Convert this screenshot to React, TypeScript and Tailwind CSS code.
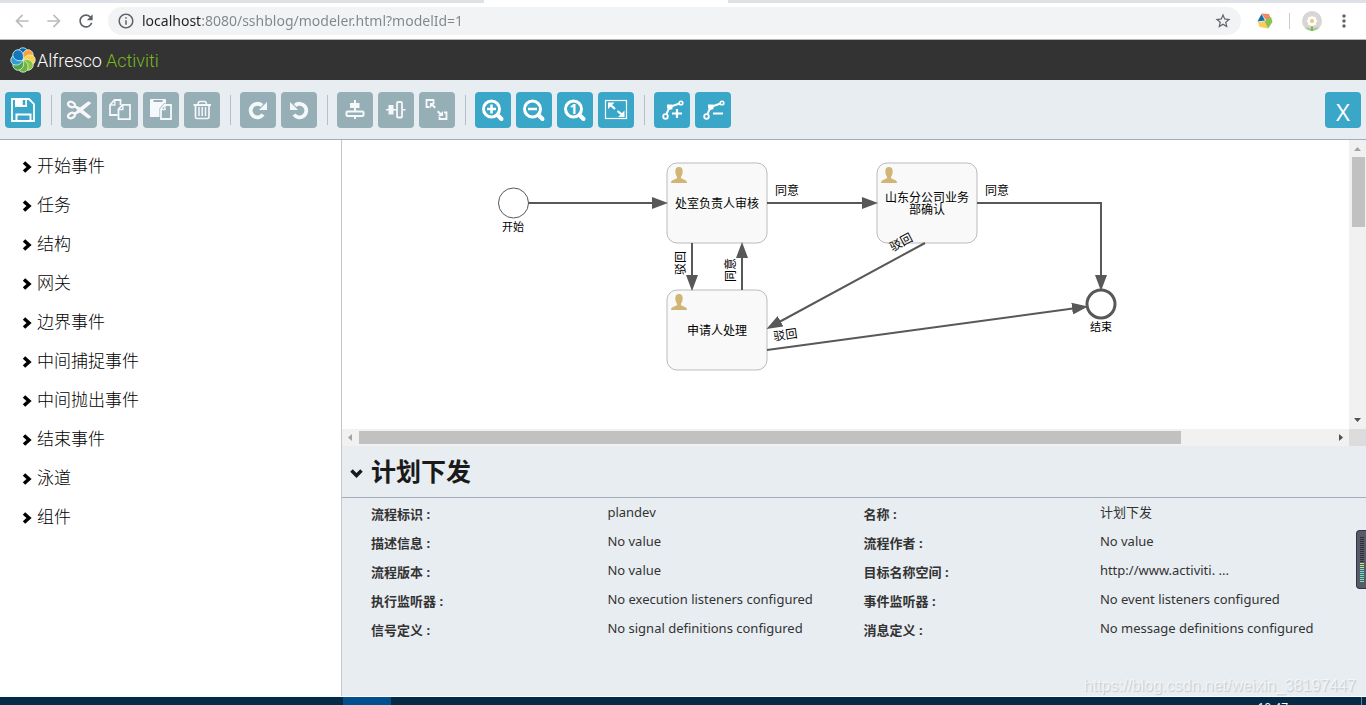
import type { ReactNode } from 'react'
import { MdArrowBack, MdArrowForward, MdInfoOutline, MdMoreVert, MdRefresh, MdStarBorder } from 'react-icons/md'

// ── Data ──

const paletteGroups = ['开始事件', '任务', '结构', '网关', '边界事件', '中间捕捉事件', '中间抛出事件', '结束事件', '泳道', '组件']

const properties: [string, string][] = [
  ['流程标识', 'plandev'],
  ['名称', '计划下发'],
  ['描述信息', 'No value'],
  ['流程作者', 'No value'],
  ['流程版本', 'No value'],
  ['目标名称空间', 'http://www.activiti. ...'],
  ['执行监听器', 'No execution listeners configured'],
  ['事件监听器', 'No event listeners configured'],
  ['信号定义', 'No signal definitions configured'],
  ['消息定义', 'No message definitions configured'],
]

// ── Browser chrome ──

function BrowserBar() {
  return (
    <div className="shrink-0 border-b border-[#b6b6b6] bg-white">
      <div className="flex h-[3px] bg-[#dee1e6]">
        <div className="ml-[484px] w-[244px] bg-white" />
      </div>
      <div className="flex h-9 items-center pr-3 pl-3">
        <button aria-label="Back" className="mr-3 text-[#babcbe]"><MdArrowBack size={20} /></button>
        <button aria-label="Forward" className="mr-3 text-[#babcbe]"><MdArrowForward size={20} /></button>
        <button aria-label="Reload" className="mr-3 text-[#5f6368]"><MdRefresh size={20} /></button>
        <div className="flex h-7 flex-1 items-center rounded-full bg-[#f1f3f4] pr-[9px] pl-[9px] text-[#5f6368]">
          <MdInfoOutline size={18} />
          <input
            aria-label="Address"
            className="ml-[7px] min-w-0 flex-1 bg-[linear-gradient(90deg,#202124_60px,#80868b_60px)] bg-clip-text font-['Noto_Sans',sans-serif] text-sm text-transparent outline-none"
            defaultValue="localhost:8080/sshblog/modeler.html?modelId=1"
          />
          <button aria-label="Bookmark"><MdStarBorder size={18} /></button>
        </div>
        <button aria-label="Extension" className="ml-4">
          <svg width="16" height="16" viewBox="0 0 16 16">
            <path d="M4.500 0.500 L12 1 L14 6 L8 6 Z" fill="#f4895f" />
            <path d="M4.500 1 L8 7.500 L0.500 8.500 Z" fill="#0c6fae" />
            <path d="M1 9 L8 8 L11 15.500 L2.500 14 Z" fill="#f9cf5a" />
            <path d="M9 6 L14 4 L15.500 9 L11 15.500 L8 9 Z" fill="#8cc152" />
          </svg>
        </button>
        <div className="ml-4 h-4 w-px bg-[#c8cacd]" />
        <button aria-label="Profile" className="ml-3 overflow-hidden rounded-full">
          <svg width="20" height="20" viewBox="0 0 20 20">
            <rect width="20" height="20" fill="#d6d6d4" />
            <path d="M3 17 Q8 15.500 10 19 Q13 15.500 17 17 L17 20 L3 20 Z" fill="#a3cf86" />
            <path d="M10 12 V20" stroke="#5d8a45" strokeWidth="1.200" />
            {[0, 45, 90, 135, 180, 225, 270, 315].map((a) => (
              <ellipse key={a} cx="10" cy="7.500" rx="1.700" ry="2.800" fill="#fff" transform={`rotate(${a} 10 10)`} />
            ))}
            <circle cx="10" cy="10" r="2" fill="#f0c75e" />
          </svg>
        </button>
        <button aria-label="Menu" className="ml-3 text-[#5f6368]"><MdMoreVert size={20} /></button>
      </div>
    </div>
  )
}

// ── Product header ──

const petals = ['#0a67b2', '#f9a13a', '#ffcf45', '#8cc63f', '#6cb33f', '#4ca64c', '#2f9ed8', '#1177c0']

function AppHeader() {
  return (
    <header className="flex h-10 shrink-0 items-center bg-[#333333] pl-[10px] font-[Roboto,sans-serif] text-lg font-light">
      <svg width="26" height="26" viewBox="0 0 26 26" className="mr-px">
        {petals.map((color, i) => (
          <path
            key={color}
            d="M13 13 C9.500 11.500 7.500 8.500 8 5 C8.500 2 10.500 0.800 13 0.800 C16 0.800 18 3 18 6 C18 9 15.500 11.500 13 13 Z"
            fill={color}
            stroke="#e6f2e6"
            strokeWidth="0.800"
            transform={`rotate(${i * 45} 13 13)`}
          />
        ))}
      </svg>
      <span className="pt-[2px] text-white">Alfresco</span>
      <span className="ml-1 pt-[2px] text-[#79b81e]">Activiti</span>
    </header>
  )
}

// ── Toolbar ──

function Tool({ label, active, children }: { label: string; active?: boolean; children: ReactNode }) {
  return (
    <button
      aria-label={label}
      title={label}
      className={`size-9 shrink-0 rounded-sm ${active ? 'bg-[#3aa7c9] text-white' : 'bg-[#96aeb5] text-[#f5f8fa]'}`}
    >
      <svg width="36" height="36" viewBox="0 0 36 36" fill="none" stroke="currentColor" strokeWidth="2">
        {children}
      </svg>
    </button>
  )
}

function Separator() {
  return <div className="mr-1 ml-[5px] h-[30px] w-px shrink-0 bg-[#b4bfc8]" />
}

function Lens({ children }: { children: ReactNode }) {
  return (
    <>
      <circle cx="16.500" cy="17" r="8" strokeWidth="3" />
      <path d="M22.500 23 L26.500 27" strokeWidth="4" strokeLinecap="round" />
      {children}
    </>
  )
}

function BendPoint() {
  return (
    <>
      <circle cx="11.500" cy="24.500" r="2.300" strokeWidth="1.800" />
      <circle cx="27" cy="11" r="1.800" strokeWidth="1.600" />
      <path d="M12.500 22 L15.500 15 L25.500 11.500" />
      <path d="M13 12.500 H18.500 V17 L15.500 18 L13 16 Z" fill="currentColor" stroke="none" />
    </>
  )
}

const redoShape = (
  <>
    <path d="M23 22.500 A6.800 6.800 0 1 1 22 13.500" strokeWidth="3.800" />
    <path d="M27 10 V18 H19 Z" fill="currentColor" stroke="none" />
  </>
)

function Toolbar() {
  return (
    <div role="toolbar" className="flex h-[60px] shrink-0 items-center gap-[5px] border-b border-[#a4acb9] bg-[#e8edf1] px-[5px]">
      <Tool label="保存" active>
        <path d="M7 7 H24 L29 12 V29 H7 Z" strokeWidth="1.800" />
        <path d="M10 7 H22 V15 H10 Z" fill="currentColor" stroke="none" />
        <path d="M19 8 V13" stroke="#3aa7c9" strokeWidth="2.500" />
        <path d="M11.500 29 V22.500 H25.500 V29" />
      </Tool>
      <Separator />
      <Tool label="剪切">
        <ellipse cx="10.500" cy="12.500" rx="3.600" ry="2.500" transform="rotate(25 10.500 12.500)" strokeWidth="2.400" />
        <ellipse cx="10.500" cy="23.500" rx="3.600" ry="2.500" transform="rotate(-25 10.500 23.500)" strokeWidth="2.400" />
        <path d="M14 13 L19 15.500 L27 9.500 Q29.500 9 30 11.500 L22 18 L30 24.500 Q29.500 27 27 26.500 L19 20.500 L14 23 L13 21 L16.500 18 L13 15 Z" fill="currentColor" stroke="none" />
      </Tool>
      <Tool label="复制">
        <path d="M15.500 23 H8 V13 L12.500 8 H18.500 V13" strokeWidth="1.800" />
        <path d="M12.800 8 V13 H8" strokeWidth="1.400" />
        <path d="M20.500 12.800 H28 V27.200 H16.500 V17 Z" strokeWidth="1.800" />
        <path d="M20.800 13 V17.500 H16.500" strokeWidth="1.400" />
      </Tool>
      <Tool label="粘贴">
        <path d="M7 8 Q7 7 8 7 H22 Q23 7 23 8 V25 H7 Z" fill="currentColor" stroke="none" />
        <path d="M10.500 9 H19.500" stroke="#96aeb5" />
        <path d="M21.500 13 H28 V27 H18 V17 Z" fill="#96aeb5" stroke="#96aeb5" strokeWidth="3" />
        <path d="M21.500 13 H28 V27 H18 V17 Z" strokeWidth="1.800" />
        <path d="M22 13 V17.500 H18" strokeWidth="1.400" />
      </Tool>
      <Tool label="删除">
        <path d="M9.500 13 H27" />
        <path d="M14 12.500 Q14 9.500 16 9.500 H20.500 Q22.500 9.500 22.500 12.500" strokeWidth="1.500" />
        <path d="M11.500 13 V25 Q11.500 26.500 13 26.500 H23.500 Q25 26.500 25 25 V13" strokeWidth="1.700" />
        <path d="M15 15 V24 M18.200 15 V24 M21.500 15 V24" strokeWidth="1.500" />
      </Tool>
      <Separator />
      <Tool label="重做">{redoShape}</Tool>
      <Tool label="撤销">
        <g transform="matrix(-1 0 0 1 36 0)">{redoShape}</g>
      </Tool>
      <Separator />
      <Tool label="垂直对齐">
        <path d="M13 11 H22.500 V16 H13 Z" fill="currentColor" stroke="none" />
        <path d="M18 8 V19 M18 25 V27" />
        <rect x="9.500" y="19.500" width="17" height="4.500" rx="1" />
      </Tool>
      <Tool label="水平对齐">
        <path d="M10.500 13 H15.500 V22.500 H10.500 Z" fill="currentColor" stroke="none" />
        <path d="M8 17.800 H19 M25 17.800 H27.500" strokeWidth="1.500" />
        <rect x="19" y="10" width="5" height="15.500" rx="1" strokeWidth="1.800" />
      </Tool>
      <Tool label="相同大小">
        <path d="M10.500 15 H7.500 V8 H14.500 V11" strokeWidth="1.800" />
        <path d="M11 11 H16 L14.500 12.500 L17 15 L15.500 16.500 L13 14 L11 16 Z" fill="currentColor" stroke="none" />
        <path d="M25 20.500 H27.500 V27 H20.500 V24.500" strokeWidth="1.800" />
        <path d="M24 24 H19 L20.500 22.500 L18 20 L19.500 18.500 L22 21 L24 19 Z" fill="currentColor" stroke="none" />
      </Tool>
      <Separator />
      <Tool label="放大" active>
        <Lens><path d="M12 17 H21 M16.500 12.500 V21.500" strokeWidth="2.500" /></Lens>
      </Tool>
      <Tool label="缩小" active>
        <Lens><path d="M12 17 H21" strokeWidth="2.500" /></Lens>
      </Tool>
      <Tool label="实际大小" active>
        <Lens>
          <text x="16.500" y="22" textAnchor="middle" fill="currentColor" stroke="none" className="font-['Open_Sans',sans-serif] text-sm font-bold">1</text>
        </Lens>
      </Tool>
      <Tool label="适应窗口" active>
        <rect x="7.500" y="8.500" width="21" height="18" strokeWidth="1.200" />
        <path d="M10 10.500 H16.500 L10 17 Z M26.500 25 H20 L26.500 18.500 Z" fill="currentColor" stroke="none" />
        <path d="M12 12.500 L17 17 M19.500 19 L24.500 23" strokeWidth="2.200" />
      </Tool>
      <Separator />
      <Tool label="添加拐点" active>
        <BendPoint />
        <path d="M18 21.500 H28 M23 17 V26" strokeWidth="2.200" />
      </Tool>
      <Tool label="删除拐点" active>
        <BendPoint />
        <path d="M18 21.500 H28" />
      </Tool>
      <button aria-label="关闭" className="ml-auto size-9 shrink-0 rounded-sm bg-[#3aa7c9] pt-1 text-2xl leading-8 text-white">X</button>
    </div>
  )
}

// ── Palette ──

function Palette() {
  return (
    <nav className="w-[342px] shrink-0 border-r border-[#c3c7cb] bg-white pt-[6px] pl-[22px]">
      {paletteGroups.map((name) => (
        <button key={name} className="flex h-[39px] w-full items-center gap-[5px] text-[17px] font-light text-black">
          <svg width="10" height="12" viewBox="0 0 10 12" className="mt-[2px]">
            <path d="M2 1.500 L7 6 L2 10.500" fill="none" stroke="currentColor" strokeWidth="3.500" />
          </svg>
          {name}
        </button>
      ))}
    </nav>
  )
}

// ── Process diagram ──

function Task({ x, y, lines }: { x: number; y: number; lines: string[] }) {
  return (
    <g transform={`translate(${x} ${y})`}>
      <rect width="100" height="80" rx="10" fill="#f9f9f9" stroke="#bbbbbb" />
      <path
        transform="translate(4 4)"
        d="M8 0 C5.300 0 4.200 1.800 4.300 4.500 C4.400 7 5.300 8.800 6 9.800 V11.200 L1.500 13.200 Q0 14 0 16 H16 Q16 14 14.500 13.200 L10 11.200 V9.800 C10.700 8.800 11.600 7 11.700 4.500 C11.800 1.800 10.700 0 8 0 Z"
        fill="#d1b575"
      />
      {lines.map((line, i) => (
        <text key={line} x="50" y={45 - (lines.length - 1) * 6 + i * 12} textAnchor="middle">{line}</text>
      ))}
    </g>
  )
}

const flows = [
  'M186 63 H322',
  'M425 63 H532',
  'M635 63 H759 V147',
  'M350 103 V147',
  'M400 150 V106',
  'M583 103 L428 187',
  'M425 210 L742 167',
]

function Diagram() {
  return (
    <svg width="1007" height="289" viewBox="0 0 1007 289" className="block max-w-none text-xs" fill="#000">
      <defs>
        <marker id="arrow" markerUnits="userSpaceOnUse" markerWidth="16" markerHeight="12" refX="12" refY="6" orient="auto">
          <path d="M0 0 L16 6 L0 12 Z" fill="#585858" />
        </marker>
      </defs>
      <circle cx="171.500" cy="63" r="15" fill="#fff" stroke="#585858" />
      <text x="171" y="91" textAnchor="middle" className="text-[11px]">开始</text>
      <Task x={325} y={23} lines={['处室负责人审核']} />
      <Task x={535} y={23} lines={['山东分公司业务', '部确认']} />
      <Task x={325} y={150} lines={['申请人处理']} />
      <circle cx="759" cy="164" r="14" fill="#fff" stroke="#585858" strokeWidth="3" />
      <text x="759" y="191" textAnchor="middle" className="text-[11px]">结束</text>
      {flows.map((d) => (
        <path key={d} d={d} fill="none" stroke="#585858" strokeWidth="2" markerEnd="url(#arrow)" />
      ))}
      <text x="433" y="55">同意</text>
      <text x="643" y="55">同意</text>
      <text transform="translate(343 123) rotate(-90)" textAnchor="middle">驳回</text>
      <text transform="translate(393 130) rotate(-90)" textAnchor="middle">同意</text>
      <text transform="translate(561 106) rotate(-28)" textAnchor="middle">驳回</text>
      <text transform="translate(444 199) rotate(-8)" textAnchor="middle">驳回</text>
    </svg>
  )
}

function ScrollArrow({ d, muted }: { d: string; muted?: boolean }) {
  return (
    <svg width="17" height="17" viewBox="0 0 17 17" className="shrink-0">
      <path d={d} fill={muted ? '#a3a3a3' : '#505050'} />
    </svg>
  )
}

function Canvas() {
  return (
    <div className="grid h-[306px] shrink-0 grid-cols-[minmax(0,1fr)_17px] grid-rows-[minmax(0,1fr)_17px]">
      <div className="overflow-hidden bg-white"><Diagram /></div>
      <div className="flex flex-col items-center bg-[#f1f1f1]">
        <ScrollArrow d="M5 11 L8.500 7 L12 11 Z" muted />
        <div className="w-full flex-1 pr-px pl-[3px]"><div className="h-[70px] bg-[#c1c1c1]" /></div>
        <ScrollArrow d="M5 6 L8.500 10 L12 6 Z" />
      </div>
      <div className="flex items-center bg-[#f1f1f1]">
        <ScrollArrow d="M10 5 L6 8.500 L10 12 Z" muted />
        <div className="flex-1"><div className="h-[13px] w-[84.5%] bg-[#c1c1c1]" /></div>
        <ScrollArrow d="M7 5 L11 8.500 L7 12 Z" />
      </div>
      <div className="bg-[#dcdcdc]" />
    </div>
  )
}

// ── Properties ──

function PropertyPanel() {
  return (
    <section className="relative flex-1 bg-[#e8edf1]">
      <div className="flex h-[52px] items-center gap-2 border-b border-[#a4acb9] pl-2 text-[#1a1a1a]">
        <svg width="13" height="9" viewBox="0 0 13 9" className="mt-1">
          <path d="M1.500 1.500 L6.500 6.500 L11.500 1.500" fill="none" stroke="currentColor" strokeWidth="3.500" />
        </svg>
        <h1 className="text-[25px] font-bold">计划下发</h1>
      </div>
      <dl className="grid grid-cols-2 pr-[10px] pl-[29px] font-['Noto_Sans','Noto_Sans_CJK_SC',sans-serif] text-[13px] text-[#333333]">
        {properties.map(([label, value]) => (
          <div key={label} className="flex h-[29px]">
            <dt className="w-[48%] leading-8 font-bold">{label}&nbsp;:</dt>
            <dd className="leading-7 whitespace-nowrap">{value}</dd>
          </div>
        ))}
      </dl>
      <p className="absolute right-[10px] bottom-0 font-['Liberation_Sans',sans-serif] text-base leading-5 text-white/60 [text-shadow:1px_1px_1px_#c4c8cc]">
        https://blog.csdn.net/weixin_38197447
      </p>
    </section>
  )
}

// ── Desktop extras ──

function LevelMeter() {
  return (
    <div className="fixed top-[530px] right-0 flex h-[59px] w-[10px] flex-col gap-px rounded-l-sm border border-r-0 border-[#33363f] bg-[#565b69] pt-[6px] pl-[3px]">
      {Array.from({ length: 23 }, (_, i) => (
        <div key={i} className={`h-px w-1 ${i < 13 ? 'bg-[#2c2f38]' : i < 16 ? 'bg-[#c3e88a]' : 'bg-[#6fe3c6]'}`} />
      ))}
    </div>
  )
}

function Taskbar() {
  return (
    <footer className="flex h-[9px] shrink-0 overflow-hidden border-t border-white bg-[#052a47]">
      <div className="ml-[343px] w-12 bg-[#004f8e]" />
      <time className="mt-[3px] mr-[73px] ml-auto text-xs text-white">10:47</time>
      <div className="mr-1 w-px bg-[#6d8294]" />
    </footer>
  )
}

export default function App() {
  return (
    <div className="flex h-screen flex-col overflow-hidden bg-white font-['Open_Sans','Noto_Sans_CJK_SC',sans-serif]">
      <BrowserBar />
      <AppHeader />
      <Toolbar />
      <main className="flex min-h-0 flex-1">
        <Palette />
        <div className="flex min-w-0 flex-1 flex-col">
          <Canvas />
          <PropertyPanel />
        </div>
      </main>
      <Taskbar />
      <LevelMeter />
    </div>
  )
}
